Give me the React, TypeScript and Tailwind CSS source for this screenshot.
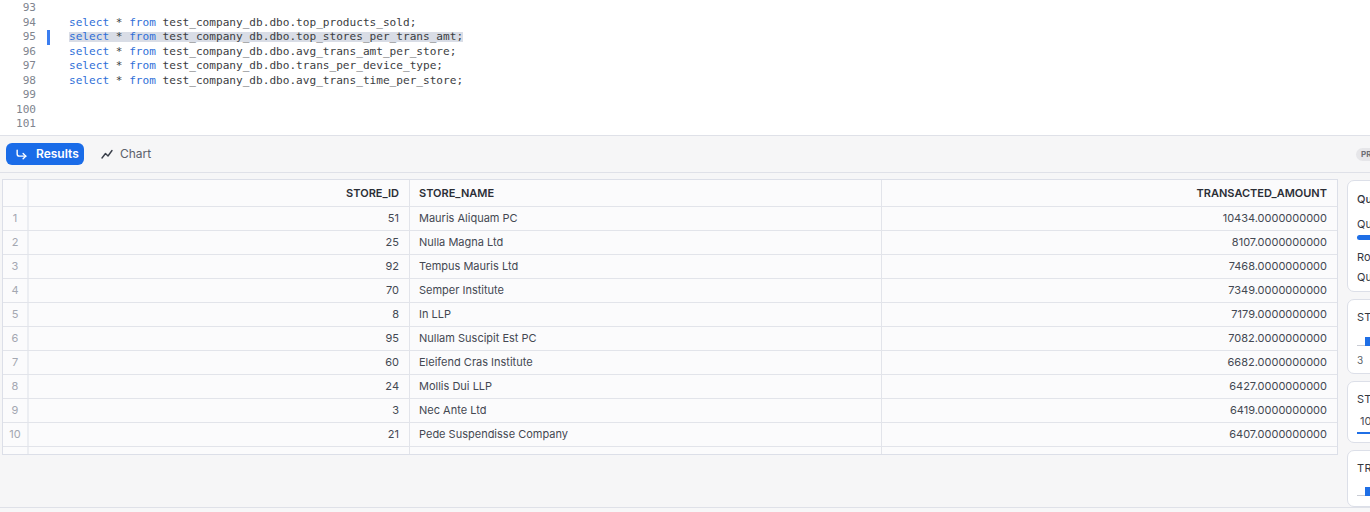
import * as React from "react";

const codeLines: { n: number; table?: string; active?: boolean }[] = [
  { n: 93 },
  { n: 94, table: "test_company_db.dbo.top_products_sold;" },
  { n: 95, table: "test_company_db.dbo.top_stores_per_trans_amt;", active: true },
  { n: 96, table: "test_company_db.dbo.avg_trans_amt_per_store;" },
  { n: 97, table: "test_company_db.dbo.trans_per_device_type;" },
  { n: 98, table: "test_company_db.dbo.avg_trans_time_per_store;" },
  { n: 99 },
  { n: 100 },
  { n: 101 },
];

const rows = [
  { id: 51, name: "Mauris Aliquam PC", amount: "10434.0000000000" },
  { id: 25, name: "Nulla Magna Ltd", amount: "8107.0000000000" },
  { id: 92, name: "Tempus Mauris Ltd", amount: "7468.0000000000" },
  { id: 70, name: "Semper Institute", amount: "7349.0000000000" },
  { id: 8, name: "In LLP", amount: "7179.0000000000" },
  { id: 95, name: "Nullam Suscipit Est PC", amount: "7082.0000000000" },
  { id: 60, name: "Eleifend Cras Institute", amount: "6682.0000000000" },
  { id: 24, name: "Mollis Dui LLP", amount: "6427.0000000000" },
  { id: 3, name: "Nec Ante Ltd", amount: "6419.0000000000" },
  { id: 21, name: "Pede Suspendisse Company", amount: "6407.0000000000" },
];

const gridCols = "grid grid-cols-[26px_381px_472px_1fr]";

function CornerIcon() {
  return (
    <svg width="13" height="13" viewBox="0 0 24 24" fill="none" stroke="currentColor" strokeWidth="2.6" strokeLinecap="round" strokeLinejoin="round">
      <polyline points="15 10 20 15 15 20" />
      <path d="M4 4v7a4 4 0 0 0 4 4h12" />
    </svg>
  );
}

function ChartIcon() {
  return (
    <svg width="12" height="12" viewBox="0 0 12 12" fill="none" stroke="currentColor" strokeWidth="1.4" strokeLinecap="round" strokeLinejoin="round">
      <polyline points="1 10 4.5 5.5 7 8 11 2.5" />
    </svg>
  );
}

export default function App() {
  return (
    <div className="w-[1370px] h-[512px] overflow-hidden bg-[#f6f6f7] flex flex-col font-['Inter',sans-serif]">
      {/* Editor */}
      <div className="h-[136px] shrink-0 bg-white border-b border-[#dfe1e8] flex pt-[1px] font-['DejaVu_Sans_Mono',monospace] text-[11.1px] leading-[14.5px]">
        <div className="w-[47px] shrink-0 flex flex-col items-end pr-[11px] text-[#80858f]">
          {codeLines.map((l) => (
            <div key={l.n} className="h-[14.5px]">{l.n}</div>
          ))}
        </div>
        <div className="w-[3px] shrink-0 flex flex-col">
          {codeLines.map((l) => (
            <div key={l.n} className={l.active ? "h-[14.5px] bg-[#3b7ef0]" : "h-[14.5px]"} />
          ))}
        </div>
        <div className="flex-1 flex flex-col pl-[19px] text-[#3b3d42] whitespace-pre">
          {codeLines.map((l) => (
            <div key={l.n} className="h-[14.5px]">
              {l.table && (
                <span
                  className={
                    l.active
                      ? "bg-[linear-gradient(transparent_2px,#d9dde6_2px,#d9dde6_12.5px,transparent_12.5px)]"
                      : ""
                  }
                >
                  <span className="text-[#2f6fd8]">select</span> * <span className="text-[#2f6fd8]">from</span> {l.table}
                </span>
              )}
            </div>
          ))}
        </div>
      </div>

      {/* Toolbar */}
      <div className="h-[37px] shrink-0 border-b border-[#dfe1e8] flex items-center pl-[6px] w-[1420px]">
        <button className="w-[78px] h-[22px] rounded-[6px] bg-[#1a6ce8] text-white flex items-center pl-[9px] gap-[8px] text-[12px] font-semibold">
          <CornerIcon />
          Results
        </button>
        <div className="flex items-center gap-[7px] ml-[17px] text-[12px] text-[#5b606b]">
          <span className="text-[#3a3f4a]"><ChartIcon /></span>
          Chart
        </div>
        <div className="ml-auto mr-[16px] h-[13px] px-[5px] rounded-full bg-[#e6e6e9] text-[8px] font-bold text-[#6c6e75] flex items-center tracking-wide">
          PREVIEW
        </div>
      </div>

      {/* Results area */}
      <div className="h-[334px] shrink-0 flex gap-[9px] pl-[2px] pt-[6px] w-[1620px]">
        <div className="w-[1336px] h-[276px] shrink-0 border border-[#dcdfe8] bg-[#fbfbfc] overflow-hidden text-[11px]">
          <div className={`${gridCols} h-[27px] border-b border-[#e2e4ea] font-semibold text-[#2b2e36]`}>
            <div className="border-r-2 border-[#eceef2]" />
            <div className="border-r border-[#e2e4ea] flex items-center justify-end pr-[10px]">STORE_ID</div>
            <div className="border-r border-[#e2e4ea] flex items-center pl-[9px]">STORE_NAME</div>
            <div className="flex items-center justify-end pr-[10px]">TRANSACTED_AMOUNT</div>
          </div>
          {rows.map((r, i) => (
            <div key={i} className={`${gridCols} h-[24px] border-b border-[#e2e4ea] text-[#444852]`}>
              <div className="border-r-2 border-[#eceef2] flex items-center justify-center text-[#a3a7b1]">{i + 1}</div>
              <div className="border-r border-[#e2e4ea] flex items-center justify-end pr-[10px]">{r.id}</div>
              <div className="border-r border-[#e2e4ea] flex items-center pl-[9px]">{r.name}</div>
              <div className="flex items-center justify-end pr-[10px]">{r.amount}</div>
            </div>
          ))}
          <div className={`${gridCols} h-[8px]`}>
            <div className="border-r-2 border-[#eceef2]" />
            <div className="border-r border-[#e2e4ea]" />
            <div className="border-r border-[#e2e4ea]" />
            <div />
          </div>
        </div>

        {/* Side panel */}
        <div className="w-[240px] shrink-0 flex flex-col gap-[7px] text-[11px] text-[#34373f]">
          <div className="h-[119px] mt-[1px] rounded-[7px] border border-[#dcdfe8] bg-white px-[9px] pt-[11px] flex flex-col">
            <div className="font-medium leading-[14px]">Query Details</div>
            <div className="mt-[11px] leading-[14px]">Query duration</div>
            <div className="mt-[4px] h-[5px] w-[120px] rounded-sm bg-[#1f6fe6]" />
            <div className="mt-[10px] leading-[14px]">Rows</div>
            <div className="mt-[6px] leading-[14px]">Query ID</div>
          </div>
          <div className="h-[79px] rounded-[7px] border border-[#dcdfe8] bg-white px-[9px] pt-[10px] flex flex-col">
            <div className="leading-[14px] tracking-wide">STORE_ID</div>
            <div className="mt-[13px] flex items-end h-[9px]">
              <div className="w-[8px] h-px bg-[#c9ccd4]" />
              <div className="w-[6px] h-[9px] bg-[#1f6fe6]" />
              <div className="w-[6px] h-[4px] bg-[#1f6fe6] ml-px" />
              <div className="w-[160px] h-px bg-[#c9ccd4]" />
            </div>
            <div className="mt-[7px] text-[10px] text-[#5b5f69] leading-[14px]">3</div>
          </div>
          <div className="h-[66px] rounded-[7px] border border-[#dcdfe8] bg-white px-[9px] pt-[10px] flex flex-col">
            <div className="leading-[14px] tracking-wide">STORE_NAME</div>
            <div className="mt-[8px] pl-[3px] leading-[14px] text-[#4a4e58]">10 unique values</div>
            <div className="mt-[4px] h-[2px] w-[200px] bg-[#1f6fe6]" />
          </div>
          <div className="h-[60px] rounded-[7px] border border-[#dcdfe8] bg-white px-[9px] pt-[10px] flex flex-col">
            <div className="leading-[14px] tracking-wide">TRANSACTED_AMOUNT</div>
            <div className="mt-[12px] flex items-end h-[9px]">
              <div className="w-[8px] h-px bg-[#c9ccd4]" />
              <div className="w-[6px] h-[9px] bg-[#1f6fe6]" />
            </div>
          </div>
        </div>
      </div>

      <div className="flex-1 border-t border-[#dfe1e8] bg-[#f7f7f8]" />
    </div>
  );
}
